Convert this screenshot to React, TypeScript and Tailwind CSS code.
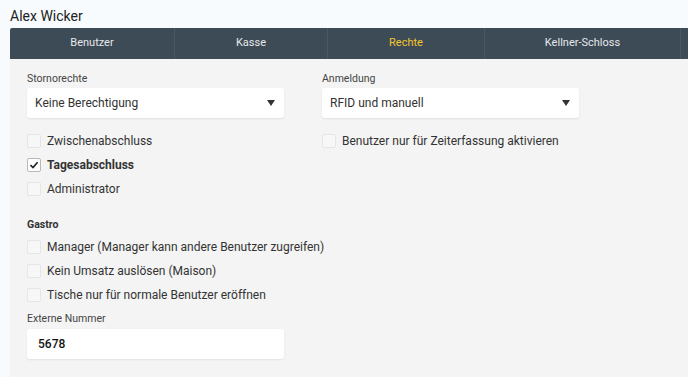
const tabs = [
  { label: "Benutzer", w: "w-[165px]" },
  { label: "Kasse", w: "w-[153px]" },
  { label: "Rechte", w: "w-[157px]", active: true },
  { label: "Kellner-Schloss", w: "w-[196px]" },
]

function Checkbox({ label, checked, bold }: { label: string; checked?: boolean; bold?: boolean }) {
  return (
    <div className="flex items-center h-[24px]">
      <span
        className={`w-[14px] h-[14px] rounded-[2px] border flex items-center justify-center ${
          checked ? "border-[#b8b8b8] bg-white" : "border-[#e6e6e6] bg-[#f7f7f7]"
        }`}
      >
        {checked && (
          <svg width="10" height="10" viewBox="0 0 10 10">
            <path d="M1.5 5.2 L4 7.6 L8.6 2.2" fill="none" stroke="#222" strokeWidth="1.6" />
          </svg>
        )}
      </span>
      <span className={`ml-[6px] text-[12px] text-[#333] ${bold ? "font-bold" : ""}`}>{label}</span>
    </div>
  )
}

function Select({ label, value }: { label: string; value: string }) {
  return (
    <div className="w-[257px]">
      <div className="text-[10.5px] text-[#444] h-[20px] leading-[20px]">{label}</div>
      <div className="mt-[-1px] h-[30px] bg-white rounded-[3px] shadow-[0_1px_2px_rgba(0,0,0,0.08)] flex items-center justify-between pl-[8px] pr-[9px]">
        <span className="text-[12px] text-[#333]">{value}</span>
        <svg width="8" height="6" viewBox="0 0 8 6">
          <path d="M0 0 H8 L4 6 Z" fill="#333" />
        </svg>
      </div>
    </div>
  )
}

export default function App() {
  return (
    <div className="w-[688px] h-[377px] overflow-hidden bg-[#f7fbfd] pl-[10px] font-['Roboto',sans-serif]">
      <h1 className="text-[14px] text-[#222] h-[28px] leading-[32px]">Alex Wicker</h1>
      <div className="flex h-[31px] bg-[#3d4b56] rounded-tl-[2px]">
        {tabs.map((t) => (
          <div
            key={t.label}
            className={`${t.w} flex items-center justify-center text-[11px] border-r border-[#4a5862] ${
              t.active ? "text-[#f3c632]" : "text-[#e6e8ea]"
            }`}
          >
            {t.label}
          </div>
        ))}
      </div>
      <div className="bg-[#f4f4f4] h-[318px] pl-[17px] pt-[10px]">
        <div className="flex gap-[38px]">
          <Select label="Stornorechte" value="Keine Berechtigung" />
          <Select label="Anmeldung" value="RFID und manuell" />
        </div>
        <div className="flex gap-[38px] mt-[11px]">
          <div className="w-[257px]">
            <Checkbox label="Zwischenabschluss" />
            <Checkbox label="Tagesabschluss" checked bold />
            <Checkbox label="Administrator" />
          </div>
          <div>
            <Checkbox label="Benutzer nur für Zeiterfassung aktivieren" />
          </div>
        </div>
        <div className="mt-[14px] text-[10.5px] font-bold text-[#333] h-[20px] leading-[20px]">Gastro</div>
        <Checkbox label="Manager (Manager kann andere Benutzer zugreifen)" />
        <Checkbox label="Kein Umsatz auslösen (Maison)" />
        <Checkbox label="Tische nur für normale Benutzer eröffnen" />
        <div className="text-[10.5px] text-[#444] h-[20px] leading-[20px] mt-[2px]">Externe Nummer</div>
        <div className="w-[257px] h-[30px] bg-white rounded-[3px] shadow-[0_1px_2px_rgba(0,0,0,0.08)] flex items-center pl-[11px]">
          <span className="text-[12px] text-[#111] font-medium">5678</span>
        </div>
      </div>
    </div>
  )
}
